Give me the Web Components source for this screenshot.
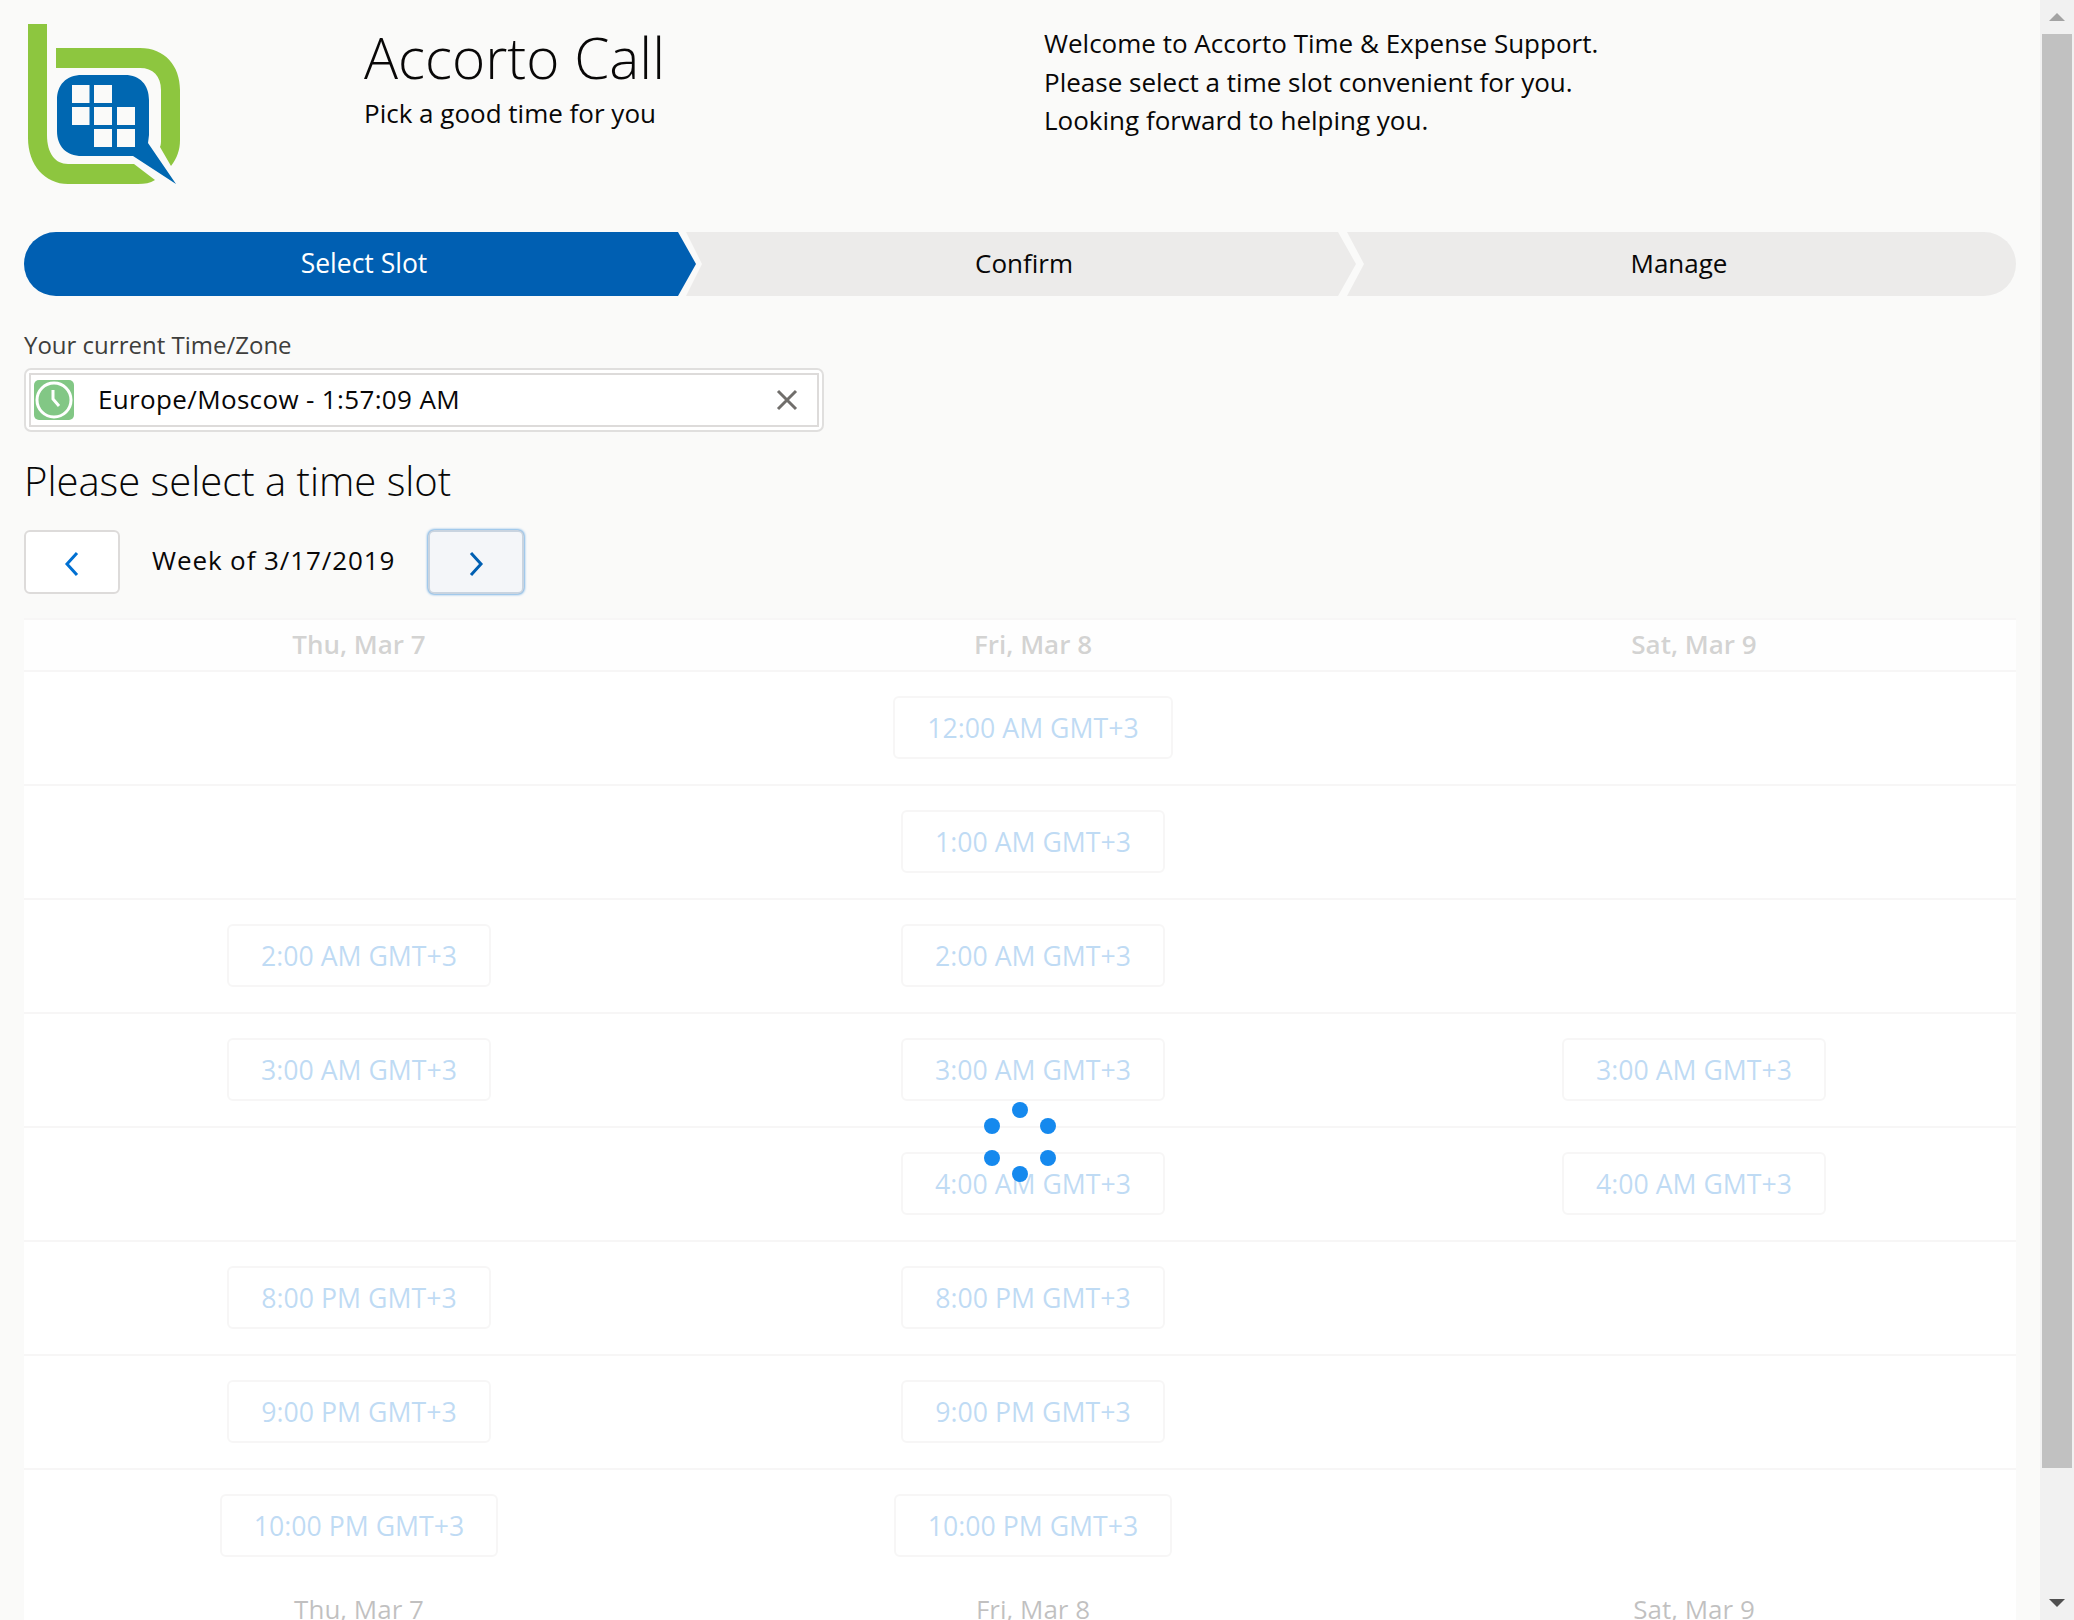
<!doctype html>
<html>
<head>
<meta charset="utf-8">
<title>Accorto Call</title>
<style>
  html, body { margin: 0; height: 100%; overflow: hidden; background: #fafaf9; }
  body {
    display: flex;
    font-family: "Open Sans", "Liberation Sans", sans-serif;
    color: #080707;
  }
  call-page { flex: 1; min-width: 0; }
</style>
</head>
<body>
<call-page></call-page>
<fake-scrollbar></fake-scrollbar>

<script>
class AccortoLogo extends HTMLElement {
  constructor() {
    super();
    this.attachShadow({ mode: "open" });
    this.shadowRoot.innerHTML = `
      <style>:host { display: block; width: 200px; height: 200px; } svg { display: block; }</style>
      <svg width="200" height="200" viewBox="0 0 200 200">
        <path fill="#8dc63f" d="M28 24H47V135C47 153 55 164 68 164H134L155 180C150 183 145 184 138 184H68C45 184 28 165 28 138Z"/>
        <path fill="#8dc63f" d="M56 48H140C165 48 180 66 180 90V140C180 150 177 158 171 166L160 147C161 145 161 142 161 140V90C161 76 153 68 140 68H56Z"/>
        <path fill="#0067b1" d="M82 75H125C140 75 149 85 149 100V135L148 143L176 184L133 156H82C66 156 57 146 57 131V100C57 85 66 75 82 75Z"/>
        <g fill="#fafaf9">
          <rect x="72" y="85" width="17.500" height="18"/><rect x="94" y="85" width="18" height="18"/>
          <rect x="72" y="107" width="17.500" height="18"/><rect x="94" y="107" width="18" height="18"/><rect x="117" y="107" width="18" height="18"/>
          <rect x="94" y="129" width="18" height="18"/><rect x="117" y="129" width="18" height="18"/>
        </g>
      </svg>`;
  }
}
customElements.define("accorto-logo", AccortoLogo);

class CallHeader extends HTMLElement {
  constructor() {
    super();
    this.attachShadow({ mode: "open" });
    this.shadowRoot.innerHTML = `
      <style>
        :host { display: grid; grid-template-columns: 364px 680px 1fr; height: 232px; }
        h1 { margin: 25px 0 0; font-size: 56.700px; line-height: 64px; font-weight: 300; }
        p { margin: 7px 0 0; font-size: 26px; line-height: 34px; }
        .welcome { padding-top: 24px; font-size: 26px; line-height: 38.600px; }
      </style>
      <accorto-logo></accorto-logo>
      <div>
        <h1>Accorto Call</h1>
        <p>Pick a good time for you</p>
      </div>
      <div class="welcome">
        Welcome to Accorto Time &amp; Expense Support.<br>
        Please select a time slot convenient for you.<br>
        Looking forward to helping you.
      </div>`;
  }
}
customElements.define("call-header", CallHeader);

class StepPath extends HTMLElement {
  constructor() {
    super();
    this.attachShadow({ mode: "open" });
    this.shadowRoot.innerHTML = `
      <style>
        :host { display: flex; height: 64px; margin: 0 24px; font-size: 26px; }
        div { display: flex; align-items: center; justify-content: center; background: #ecebea; box-sizing: border-box; padding-bottom: 2px; }
        .a { width: 672px; margin-right: -10px; background: #005fb2; color: #fff; border-radius: 32px 0 0 32px;
             clip-path: polygon(0 0, 654px 0, 100% 50%, 654px 100%, 0 100%); padding-left: 8px; font-size: 26.500px; }
        .b { width: 670px; margin-right: -9px; padding-left: 6px;
             clip-path: polygon(0 0, 652px 0, 100% 50%, 652px 100%, 0 100%, 16px 50%); }
        .c { width: 669px; padding-right: 5px; border-radius: 0 32px 32px 0; clip-path: polygon(0 0, 100% 0, 100% 100%, 0 100%, 17px 50%); }
      </style>
      <div class="a">Select Slot</div>
      <div class="b">Confirm</div>
      <div class="c">Manage</div>`;
  }
}
customElements.define("step-path", StepPath);

class ZoneField extends HTMLElement {
  constructor() {
    super();
    this.attachShadow({ mode: "open" });
    this.shadowRoot.innerHTML = `
      <style>
        :host { display: block; margin: 34px 24px 0; }
        label { display: block; font-size: 24px; line-height: 30px; color: #3e3e3c; margin-bottom: 8px; }
        .outer { width: 800px; height: 64px; box-sizing: border-box; padding: 3px; border: 2px solid #e0dfde; border-radius: 7px; background: #fff; }
        .inner { height: 100%; box-sizing: border-box; border: 2px solid #dddbda; display: flex; align-items: center; padding: 0 19px 0 3px; background: #fff; font-size: 26px; letter-spacing: .35px; }
        .icon { width: 40px; height: 40px; border-radius: 5px; background: #82c785; margin-right: 24px; flex: none; }
        svg { display: block; }
        span { flex: 1; padding-bottom: 2px; }
      </style>
      <label>Your current Time/Zone</label>
      <div class="outer"><div class="inner">
        <div class="icon"><svg width="40" height="40" viewBox="0 0 40 40">
          <circle cx="20" cy="20" r="17" fill="none" stroke="#fff" stroke-width="3"/>
          <path d="M19 10V19L25 26" fill="none" stroke="#fff" stroke-width="3"/>
        </svg></div>
        <span>Europe/Moscow - 1:57:09 AM</span>
        <svg width="22" height="22" viewBox="0 0 22 22"><path d="M2 2L20 20M20 2L2 20" stroke="#706e6b" stroke-width="3" fill="none"/></svg>
      </div></div>`;
  }
}
customElements.define("zone-field", ZoneField);

class WeekNav extends HTMLElement {
  constructor() {
    super();
    this.attachShadow({ mode: "open" });
    this.shadowRoot.innerHTML = `
      <style>
        :host { display: block; margin: 0 24px; }
        h2 { margin: 26px 0 0; font-size: 40px; line-height: 46px; font-weight: 300; }
        .row { display: flex; align-items: center; margin-top: 26px; font-size: 26px; height: 64px; }
        button { box-sizing: border-box; height: 64px; background: #fff; border: 2px solid #dddbda; border-radius: 6px; padding: 0; display: flex; align-items: center; justify-content: center; }
        .prev { width: 96px; }
        .next { width: 96px; background: #f4f6f9; border-color: #c9d4e0; box-shadow: 0 0 3px #0070d2; }
        span { margin-left: 32px; white-space: nowrap; width: 276px; letter-spacing: .9px; padding-bottom: 4px; }
        svg { display: block; margin-top: 4px; }
      </style>
      <h2>Please select a time slot</h2>
      <div class="row">
        <button class="prev"><svg width="16" height="26" viewBox="0 0 16 26"><path d="M13 2L3 13L13 24" fill="none" stroke="#0070d2" stroke-width="3"/></svg></button>
        <span>Week of 3/17/2019</span>
        <button class="next"><svg width="16" height="26" viewBox="0 0 16 26"><path d="M3 2L13 13L3 24" fill="none" stroke="#005fb2" stroke-width="3"/></svg></button>
      </div>`;
  }
}
customElements.define("week-nav", WeekNav);

class SlotButton extends HTMLElement {
  constructor() {
    super();
    this.attachShadow({ mode: "open" });
    this.shadowRoot.innerHTML = `
      <style>
        :host { display: inline-block; box-sizing: border-box; height: 63px; line-height: 59px; padding: 0 32px; background: #fff;
                border: 2px solid #dddbda; border-radius: 6px; color: #0070d2; font-size: 26.700px; white-space: nowrap; }
      </style>
      <slot></slot>`;
  }
}
customElements.define("slot-button", SlotButton);

class SlotTable extends HTMLElement {
  constructor() {
    super();
    this.attachShadow({ mode: "open" });
    const rows = [
      [null, "12:00 AM", null],
      [null, "1:00 AM", null],
      ["2:00 AM", "2:00 AM", null],
      ["3:00 AM", "3:00 AM", "3:00 AM"],
      [null, "4:00 AM", "4:00 AM"],
      ["8:00 PM", "8:00 PM", null],
      ["9:00 PM", "9:00 PM", null],
      ["10:00 PM", "10:00 PM", null],
    ];
    const days = ["Thu, Mar 7", "Fri, Mar 8", "Sat, Mar 9"];
    const cells = rows.map(r => r.map(t =>
      `<div class="cell">${t ? `<slot-button>${t} GMT+3</slot-button>` : ""}</div>`).join("")).join("");
    this.shadowRoot.innerHTML = `
      <style>
        :host { display: block; position: relative; margin: 24px 24px 0; background: #fff; }
        .headrow, .grid, .foot { display: grid; grid-template-columns: 670px 678px 644px; }
        .grid { grid-auto-rows: 114px; }
        .head { box-sizing: border-box; height: 52px; padding-bottom: 2px; display: flex; align-items: center; justify-content: center; font-weight: 600; font-size: 26px; color: #514f4d; background: #fafaf9; border-top: 2px solid #dddbda; }
        .cell { display: flex; align-items: center; justify-content: center; border-top: 2px solid #dddbda; box-sizing: border-box; padding-bottom: 2px; }
        .foot { height: 60px; }
        .foot div { text-align: center; font-size: 26px; padding-top: 10px; line-height: 34px; }
        .veil { position: absolute; inset: 0; background: rgba(255,255,255,.75); }
        .dot { position: absolute; width: 16px; height: 16px; border-radius: 50%; background: #1589ee; }
      </style>
      <div class="headrow">${days.map(d => `<div class="head">${d}</div>`).join("")}</div>
      <div class="grid">${cells}</div>
      <div class="foot">${days.map(d => `<div>${d}</div>`).join("")}</div>
      <div class="veil">
        <i class="dot" style="left:988px;top:484px"></i>
        <i class="dot" style="left:960px;top:500px"></i>
        <i class="dot" style="left:1016px;top:500px"></i>
        <i class="dot" style="left:960px;top:532px"></i>
        <i class="dot" style="left:1016px;top:532px"></i>
        <i class="dot" style="left:988px;top:548px"></i>
      </div>`;
  }
}
customElements.define("slot-table", SlotTable);

class CallPage extends HTMLElement {
  constructor() {
    super();
    this.attachShadow({ mode: "open" });
    this.shadowRoot.innerHTML = `
      <style>:host { display: block; height: 100%; overflow: hidden; }</style>
      <call-header></call-header>
      <step-path></step-path>
      <zone-field></zone-field>
      <week-nav></week-nav>
      <slot-table></slot-table>`;
  }
}
customElements.define("call-page", CallPage);

class FakeScrollbar extends HTMLElement {
  constructor() {
    super();
    this.attachShadow({ mode: "open" });
    this.shadowRoot.innerHTML = `
      <style>
        :host { display: flex; flex-direction: column; width: 34px; flex: none; background: #f1f1f1; align-items: center; }
        .up { height: 34px; flex: none; display: flex; align-items: center; justify-content: center; }
        .thumb { width: 30px; height: 1434px; background: #c1c1c1; flex: none; }
        .down { margin-top: auto; height: 34px; display: flex; align-items: center; justify-content: center; }
        .a { width: 0; height: 0; border-left: 8px solid transparent; border-right: 8px solid transparent; }
        .up .a { border-bottom: 8px solid #a3a3a3; }
        .down .a { border-top: 8px solid #505050; }
      </style>
      <div class="up"><div class="a"></div></div>
      <div class="thumb"></div>
      <div class="down"><div class="a"></div></div>`;
  }
}
customElements.define("fake-scrollbar", FakeScrollbar);
</script>
</body>
</html>
